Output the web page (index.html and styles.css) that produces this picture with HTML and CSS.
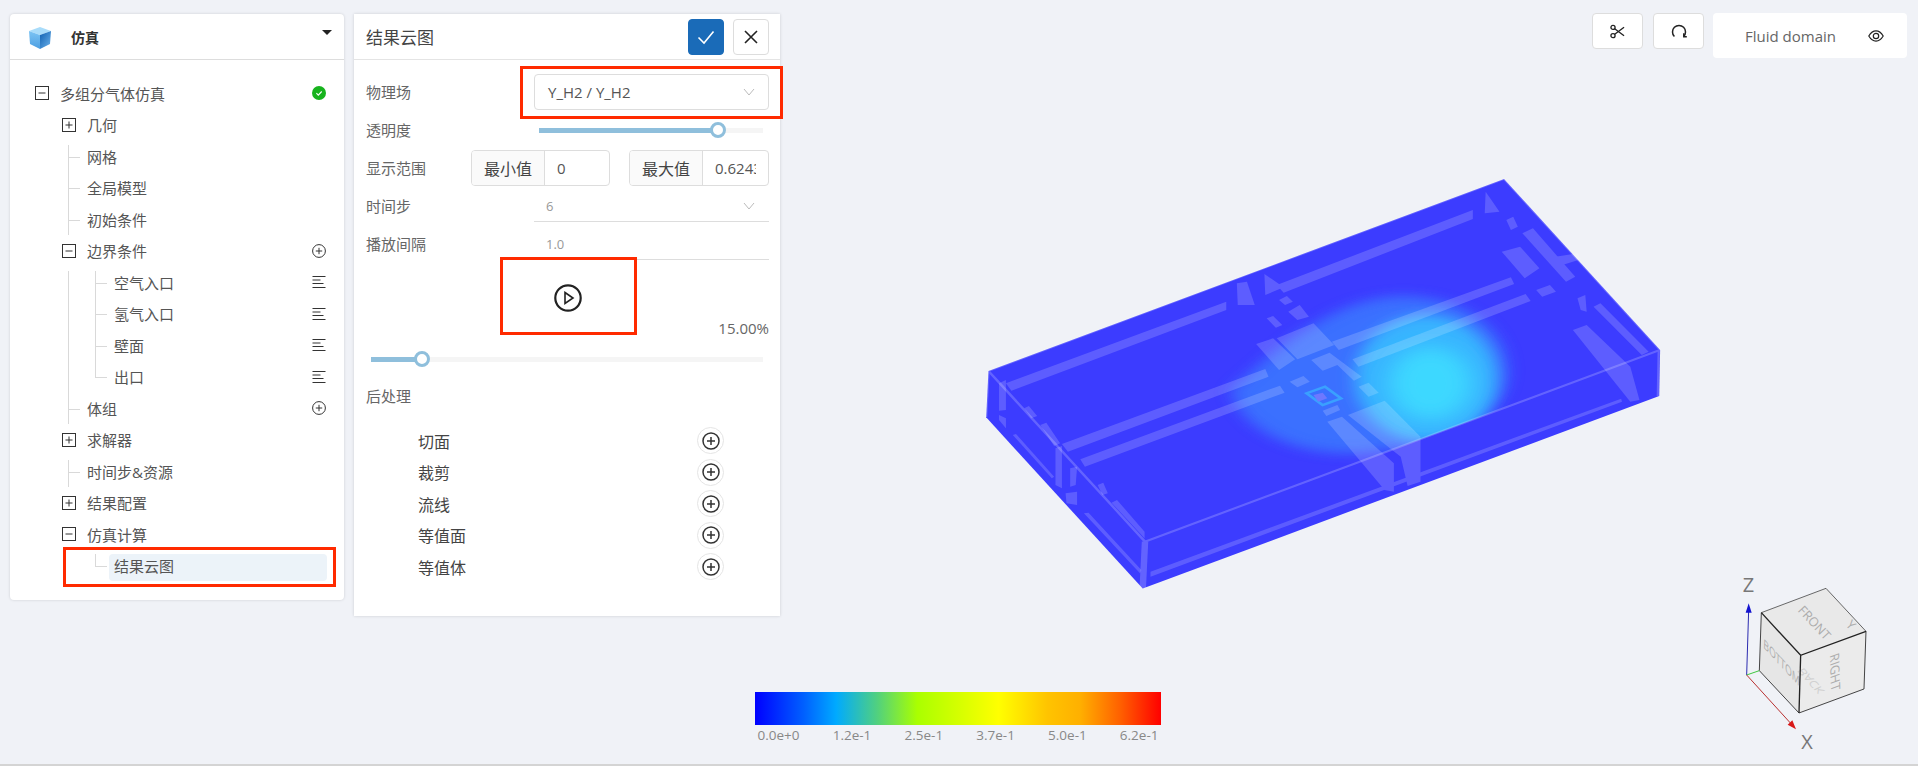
FILE: index.html
```html
<!DOCTYPE html>
<html>

<head>
    <title>仿真</title>
    <link rel="stylesheet" href="styles.css">
</head>

<body>
    <svg class="viewport" viewBox="0 0 1918 766" width="1918" height="766">
        <defs>
            <filter id="blur20" x="-40%" y="-40%" width="180%" height="180%"><feGaussianBlur stdDeviation="18"></feGaussianBlur></filter>
            <filter id="blur30" x="-50%" y="-50%" width="200%" height="200%"><feGaussianBlur stdDeviation="26"></feGaussianBlur></filter>
            <clipPath id="topFace"><polygon points="62,603 1185,27 1525,540 403,1115"></polygon></clipPath>
        </defs>

        <!-- model: coordinates below are in a stretched space, see the transform -->
        <g transform="translate(960 170) scale(0.4591 0.3333)">
            <polygon points="1185,27 62,603 57,742 398,1256 1523,678 1525,540" fill="#3c3cff"></polygon>

            <g clip-path="url(#topFace)">
                <path d="M590,660 C670,560 800,390 950,378 C1100,372 1200,480 1190,620 C1180,760 1000,860 820,850 C710,840 610,770 590,660 Z" fill="#3a7dff" opacity="0.8" filter="url(#blur20)"></path>
                <ellipse cx="1015" cy="625" rx="155" ry="190" fill="#37b4ff" filter="url(#blur20)"></ellipse>
                <ellipse cx="1025" cy="640" rx="90" ry="110" fill="#3cd8ff" filter="url(#blur30)"></ellipse>
            </g>

            <g fill="#fff" opacity="0.17">
                <polygon points="100,640 580,395 580,420 112,662"></polygon>
                <polygon points="690,345 1117,120 1117,147 705,368"></polygon>
                <polygon points="222,822 665,597 672,620 235,845"></polygon>
                <polygon points="262,868 697,647 707,668 272,890"></polygon>
                <polygon points="810,515 1200,322 1207,342 825,540"></polygon>
                <polygon points="855,568 1232,372 1243,393 868,590"></polygon>
                <polygon points="690,505 770,460 815,525 735,568"></polygon>
                <polygon points="645,522 682,505 730,568 695,600"></polygon>
                <polygon points="765,570 805,548 875,620 858,632 822,585 790,602"></polygon>
                <polygon points="718,635 748,618 762,635 735,652"></polygon>
                <polygon points="868,650 890,638 912,668 890,680"></polygon>
                <polygon points="845,735 925,692 1003,800 1003,935 975,948 960,860"></polygon>
                <polygon points="800,755 832,740 945,880 945,965 925,960"></polygon>
                <polygon points="790,722 822,705 828,720 798,738"></polygon>
                <polygon points="715,425 740,405 760,440 735,450"></polygon>
                <polygon points="695,390 712,378 725,395 708,405"></polygon>
                <polygon points="668,445 682,438 702,465 688,473"></polygon>
                <polygon points="1180,245 1220,230 1262,295 1230,325"></polygon>
                <polygon points="1255,360 1285,345 1298,365 1268,380"></polygon>
                <polygon points="1225,190 1248,175 1340,320 1320,335"></polygon>
                <polygon points="1190,150 1205,140 1215,170 1200,180"></polygon>
                <polygon points="1290,262 1345,250 1352,268 1300,290"></polygon>
                <polygon points="1335,480 1365,465 1460,590 1480,690 1460,695"></polygon>
                <polygon points="1380,410 1395,400 1500,545 1485,555"></polygon>
                <polygon points="1345,385 1362,375 1365,425 1352,420"></polygon>
                <polygon points="625,335 642,405 605,405 603,340"></polygon>
                <polygon points="663,312 705,352 665,375"></polygon>
                <polygon points="1145,65 1175,125 1143,130"></polygon>
                <polygon points="208,835 222,828 222,955 208,945"></polygon>
                <polygon points="240,895 255,890 252,945 240,950"></polygon>
                <polygon points="230,970 255,965 255,1005 232,1000"></polygon>
                <polygon points="270,1030 280,1028 395,1200 392,1210"></polygon>
                <polygon points="415,1205 1440,686 1442,695 415,1220"></polygon>
                <polygon points="115,795 122,792 205,920 200,925"></polygon>
                <polygon points="85,640 100,630 100,720 85,722"></polygon>
                <polygon points="85,735 100,745 100,775 85,750"></polygon>
                <polygon points="140,715 150,708 168,738 155,745"></polygon>
                <polygon points="175,765 188,758 218,820 205,828"></polygon>
                <polygon points="300,945 312,938 322,970 310,975"></polygon>
                <polygon points="330,998 342,990 402,1085 402,1105"></polygon>
            </g>

            <g stroke="#fff" fill="none" opacity="0.2">
                <polyline points="62,603 403,1115 1525,540" stroke-width="6"></polyline>
                <polyline points="62,603 1185,27 1525,540" stroke-width="5"></polyline>
                <line x1="403" y1="1115" x2="398" y2="1256" stroke-width="14"></line>
                <line x1="1522" y1="540" x2="1520" y2="678" stroke-width="5"></line>
                <line x1="62" y1="603" x2="57" y2="742" stroke-width="5"></line>
            </g>

            <g fill="none">
                <polygon points="755,670 795,650 830,685 790,705" stroke="#3aa0ff" stroke-width="7"></polygon>
                <polygon points="770,675 790,668 800,685 780,695" fill="#6e78ff"></polygon>
            </g>
        </g>

        <!-- orientation cube -->
        <g transform="translate(1720 560) scale(0.3333)">
            <polygon points="124,158 318,85 438,214 242,286" fill="#e9e9e9"></polygon>
            <polygon points="124,158 242,286 237,459 118,332" fill="#e6e6e6"></polygon>
            <polygon points="242,286 438,214 432,387 237,459" fill="#ebebeb"></polygon>

            <g class="cube-label">
                <text transform="matrix(0.68 0.74 -0.74 0.68 232 152)">FRONT</text>
                <text transform="matrix(0.68 0.74 -0.03 1 130 262)">BOTTOM</text>
                <text transform="matrix(0.03 1 -1 0.37 330 286)">RIGHT</text>
                <text class="cube-back" transform="matrix(0.68 0.74 0.74 -0.38 250 322)">BACK</text>
                <text transform="matrix(0.68 0.74 -0.74 0.68 376 196)">Y</text>
            </g>

            <g fill="none" stroke="#222">
                <polyline points="124,158 318,85 438,214" stroke-width="2"></polyline>
                <polyline points="124,158 242,286 438,214" stroke-width="4"></polyline>
                <line x1="242" y1="286" x2="237" y2="459" stroke-width="4"></line>
                <polyline points="124,158 118,332 237,459 432,387 438,214" stroke-width="2.5"></polyline>
            </g>

            <line x1="80" y1="345" x2="86" y2="150" stroke="#2a2ab0" stroke-width="3"></line>
            <polygon points="86,130 95,158 77,158" fill="#1414d0"></polygon>
            <line x1="80" y1="345" x2="118" y2="332" stroke="#3fc83f" stroke-width="3"></line>
            <line x1="80" y1="345" x2="212" y2="490" stroke="#b83030" stroke-width="3"></line>
            <polygon points="228,508 203,494 217,481" fill="#d81818"></polygon>

            <text class="axis-label" x="68" y="96">Z</text>
            <text class="axis-label" x="244" y="566">X</text>
        </g>
    </svg>

    <div class="app">
        <div class="card tree-card">
            <div class="card-head">
                <svg class="logo" viewBox="0 0 24 24" width="24" height="24">
                    <defs>
                        <linearGradient id="logoRight" x1="0" y1="0" x2="1" y2="1">
                            <stop offset="0" stop-color="#0f5fb0"></stop>
                            <stop offset="1" stop-color="#6db3ec"></stop>
                        </linearGradient>
                        <linearGradient id="logoLeft" x1="0" y1="0" x2="0" y2="1">
                            <stop offset="0" stop-color="#7cc4f4"></stop>
                            <stop offset="1" stop-color="#4d9fe2"></stop>
                        </linearGradient>
                    </defs>
                    <polygon points="12,1 23,5 12,9 1,5" fill="#a9dcfa"></polygon>
                    <polygon points="1,5 12,9 12,23 2,18" fill="url(#logoLeft)"></polygon>
                    <polygon points="12,9 23,5 22,18 12,23" fill="url(#logoRight)"></polygon>
                </svg>
                <span class="card-name">仿真</span>
                <span class="caret"></span>
            </div>

            <ul class="tree">
                <li class="row">
                    <svg class="expander" viewBox="0 0 14 14"><rect x="0.5" y="0.5" width="13" height="13"></rect><path d="M3.5 7h7"></path></svg>
                    <span>多组分气体仿真</span>
                    <svg class="row-icon" viewBox="0 0 14 14"><circle cx="7" cy="7" r="7" fill="#17b31d"></circle><path d="M4.4 7.2l1.9 1.9 3.4-3.6" fill="none" stroke="#fff" stroke-width="1.1"></path></svg>
                </li>
                <li class="row lvl1">
                    <svg class="expander" viewBox="0 0 14 14"><rect x="0.5" y="0.5" width="13" height="13"></rect><path d="M3.5 7h7M7 3.5v7"></path></svg>
                    <span>几何</span>
                </li>
                <li>
                    <ul class="sub">
                        <li class="row leaf1"><span>网格</span></li>
                        <li class="row leaf1"><span>全局模型</span></li>
                        <li class="row leaf1"><span>初始条件</span></li>
                    </ul>
                </li>
                <li class="row lvl1">
                    <svg class="expander" viewBox="0 0 14 14"><rect x="0.5" y="0.5" width="13" height="13"></rect><path d="M3.5 7h7"></path></svg>
                    <span>边界条件</span>
                    <svg class="row-icon" viewBox="0 0 14 14"><circle cx="7" cy="7" r="6.4" class="line-icon"></circle><path d="M3.8 7h6.4M7 3.8v6.4" class="line-icon"></path></svg>
                </li>
                <li>
                    <ul class="sub">
                        <li>
                            <ul class="sub2">
                                <li class="row leaf2"><span>空气入口</span><svg class="row-icon" viewBox="0 0 14 14"><path d="M0.5 1.5h13M0.5 5h8M0.5 8.500h11M0.5 12.500h13" class="line-icon"></path></svg></li>
                                <li class="row leaf2"><span>氢气入口</span><svg class="row-icon" viewBox="0 0 14 14"><path d="M0.5 1.500h13M0.500 5h8M0.500 8.500h11M0.500 12.500h13" class="line-icon"></path></svg></li>
                                <li class="row leaf2"><span>壁面</span><svg class="row-icon" viewBox="0 0 14 14"><path d="M0.5 1.500h13M0.500 5h8M0.500 8.500h11M0.500 12.500h13" class="line-icon"></path></svg></li>
                                <li class="row leaf2"><span>出口</span><svg class="row-icon" viewBox="0 0 14 14"><path d="M0.5 1.500h13M0.500 5h8M0.500 8.500h11M0.500 12.500h13" class="line-icon"></path></svg></li>
                            </ul>
                        </li>
                        <li class="row leaf1">
                            <span>体组</span>
                            <svg class="row-icon" viewBox="0 0 14 14"><circle cx="7" cy="7" r="6.400" class="line-icon"></circle><path d="M3.800 7h6.400M7 3.800v6.400" class="line-icon"></path></svg>
                        </li>
                    </ul>
                </li>
                <li class="row lvl1">
                    <svg class="expander" viewBox="0 0 14 14"><rect x="0.5" y="0.5" width="13" height="13"></rect><path d="M3.5 7h7M7 3.5v7"></path></svg>
                    <span>求解器</span>
                </li>
                <li>
                    <ul class="sub">
                        <li class="row leaf1"><span>时间步&amp;资源</span></li>
                    </ul>
                </li>
                <li class="row lvl1">
                    <svg class="expander" viewBox="0 0 14 14"><rect x="0.5" y="0.5" width="13" height="13"></rect><path d="M3.5 7h7M7 3.5v7"></path></svg>
                    <span>结果配置</span>
                </li>
                <li class="row lvl1">
                    <svg class="expander" viewBox="0 0 14 14"><rect x="0.5" y="0.5" width="13" height="13"></rect><path d="M3.5 7h7"></path></svg>
                    <span>仿真计算</span>
                </li>
                <li>
                    <ul class="sub2">
                        <li class="row leaf2 selected"><span>结果云图</span></li>
                    </ul>
                </li>
            </ul>
        </div>

        <div class="card panel">
            <div class="panel-head">
                <span class="panel-title">结果云图</span>
                <button class="head-btn ok">
                    <svg viewBox="0 0 18 18" width="18" height="18"><path d="M1.500 9.500l5.500 5.500 9.500-11.500" fill="none" stroke="#fff" stroke-width="1.600"></path></svg>
                </button>
                <button class="head-btn">
                    <svg viewBox="0 0 14 14" width="14" height="14"><path d="M1 1l12 12M13 1L1 13" fill="none" stroke="#222" stroke-width="1.600"></path></svg>
                </button>
            </div>

            <div class="panel-body">
                <div class="field">
                    <span class="label">物理场</span>
                    <div class="select">
                        <span>Y_H2 / Y_H2</span>
                        <svg class="chevron" viewBox="0 0 12 8"><path d="M1 1l5 6 5-6"></path></svg>
                    </div>
                </div>

                <div class="field opacity-row">
                    <span class="label">透明度</span>
                    <div class="slider short">
                        <div class="slider-fill" style="width: 80%"></div>
                        <div class="slider-thumb" style="left: 80%"></div>
                    </div>
                </div>

                <div class="field">
                    <span class="label">显示范围</span>
                    <div class="range-group">
                        <div class="range-input"><span class="addon">最小值</span><span class="range-value">0</span></div>
                        <div class="range-input"><span class="addon">最大值</span><span class="range-value">0.6243</span></div>
                    </div>
                </div>

                <div class="field plain-row first-plain">
                    <span class="label">时间步</span>
                    <div class="plain-input">
                        <span>6</span>
                        <svg class="chevron" viewBox="0 0 12 8"><path d="M1 1l5 6 5-6"></path></svg>
                    </div>
                </div>

                <div class="field plain-row">
                    <span class="label">播放间隔</span>
                    <div class="plain-input"><span>1.0</span></div>
                </div>

                <div class="play-row">
                    <svg viewBox="0 0 28 28" width="28" height="28">
                        <circle cx="14" cy="14" r="12.700" fill="none" stroke="#222" stroke-width="2.200"></circle>
                        <path d="M11 8.500l8 5.500-8 5.500z" fill="none" stroke="#222" stroke-width="1.600"></path>
                    </svg>
                </div>

                <div class="percent">15.00%</div>

                <div class="slider wide">
                    <div class="slider-fill" style="width: 13%"></div>
                    <div class="slider-thumb" style="left: 13%"></div>
                </div>

                <div class="label post-title">后处理</div>

                <ul class="post-list">
                    <li class="post-row"><span>切面</span><button class="add-btn"><svg viewBox="0 0 18 18" width="18" height="18"><circle cx="9" cy="9" r="8"></circle><path d="M5 9h8M9 5v8"></path></svg></button></li>
                    <li class="post-row"><span>裁剪</span><button class="add-btn"><svg viewBox="0 0 18 18" width="18" height="18"><circle cx="9" cy="9" r="8"></circle><path d="M5 9h8M9 5v8"></path></svg></button></li>
                    <li class="post-row"><span>流线</span><button class="add-btn"><svg viewBox="0 0 18 18" width="18" height="18"><circle cx="9" cy="9" r="8"></circle><path d="M5 9h8M9 5v8"></path></svg></button></li>
                    <li class="post-row"><span>等值面</span><button class="add-btn"><svg viewBox="0 0 18 18" width="18" height="18"><circle cx="9" cy="9" r="8"></circle><path d="M5 9h8M9 5v8"></path></svg></button></li>
                    <li class="post-row"><span>等值体</span><button class="add-btn"><svg viewBox="0 0 18 18" width="18" height="18"><circle cx="9" cy="9" r="8"></circle><path d="M5 9h8M9 5v8"></path></svg></button></li>
                </ul>
            </div>
        </div>
    </div>

    <div class="toolbar">
        <button class="tool-btn">
            <svg viewBox="0 0 16 16" width="15" height="15" fill="none" stroke="#222" stroke-width="1.400">
                <circle cx="3.200" cy="3.600" r="2.200"></circle>
                <circle cx="3.200" cy="12.400" r="2.200"></circle>
                <path d="M5 5l10 7.500M5 11l10-7.500"></path>
            </svg>
        </button>
        <button class="tool-btn">
            <svg viewBox="0 0 16 16" width="16" height="16" fill="none" stroke="#222" stroke-width="1.500">
                <path d="M3.400 13.500A6.500 6.500 0 1 1 12.600 13.500"></path>
                <path d="M12.800 10.300v3.500h3"></path>
            </svg>
        </button>
        <div class="domain-card">
            <span>Fluid domain</span>
            <svg viewBox="0 0 16 12" width="16" height="12" fill="none" stroke="#222" stroke-width="1.200">
                <path d="M0.800 6C3 2.300 5.300 0.900 8 0.900S13 2.300 15.200 6C13 9.700 10.700 11.100 8 11.100S3 9.700 0.800 6Z"></path>
                <circle cx="8" cy="6" r="2.700"></circle>
            </svg>
        </div>
    </div>

    <div class="legend">
        <div class="legend-bar"></div>
        <div class="legend-ticks">
            <span>0.0e+0</span>
            <span>1.2e-1</span>
            <span>2.5e-1</span>
            <span>3.7e-1</span>
            <span>5.0e-1</span>
            <span>6.2e-1</span>
        </div>
    </div>

    <div class="mark mark-tree"></div>
    <div class="mark mark-select"></div>
    <div class="mark mark-play"></div>
</body>

</html>
```

FILE: styles.css
```css
* {
    box-sizing: border-box;
}

body {
    margin: 0;
    width: 1918px;
    height: 766px;
    overflow: hidden;
    position: relative;
    background-color: #f0f2f7;
    border-bottom: 2px solid #d4d4d4;
    font-family: "Open Sans", "Noto Sans CJK SC", sans-serif;
    font-size: 15px;
    color: #555;
}

ul {
    list-style: none;
    margin: 0;
    padding: 0;
}

button {
    padding: 0;
    cursor: pointer;
    font: inherit;
}

.viewport {
    position: absolute;
    left: 0;
    top: 0;
}

.cube-label text {
    font-size: 38px;
    fill: #adadad;
}

.cube-label .cube-back {
    fill: #cfcfcf;
}

.axis-label {
    font-size: 60px;
    fill: #777;
}

.app {
    position: relative;
    display: flex;
    align-items: flex-start;
    gap: 10px;
    padding: 14px 0 0 10px;
}

.card {
    background-color: #fff;
    box-shadow: 0 0 3px rgba(0, 0, 0, 0.15);
}

/* left tree */
.tree-card {
    width: 334px;
    height: 586px;
    border-radius: 4px;
}

.card-head {
    display: flex;
    align-items: center;
    height: 46px;
    padding-left: 18px;
    border-bottom: 1px solid #ddd;
}

.logo {
    margin-top: 2px;
}

.card-name {
    margin-left: 19px;
    font-size: 14px;
    font-weight: 700;
    color: #333;
}

.caret {
    width: 0;
    height: 0;
    margin-left: auto;
    margin-right: 12px;
    margin-bottom: 9px;
    border-left: 5px solid transparent;
    border-right: 5px solid transparent;
    border-top: 5px solid #222;
}

.tree {
    padding: 17.500px 18px 0 25px;
}

.row {
    position: relative;
    display: flex;
    align-items: center;
    height: 31.5px;
}

.lvl1 {
    padding-left: 27px;
}

.leaf1 {
    padding-left: 52px;
}

.leaf2 {
    padding-left: 79px;
}

.expander {
    width: 14px;
    height: 14px;
    margin-right: 11px;
    flex: none;
    fill: none;
    stroke: #333;
}

.row-icon {
    width: 14px;
    height: 14px;
    margin-left: auto;
    flex: none;
}

.line-icon {
    fill: none;
    stroke: #333;
}

.sub,
.sub2 {
    position: relative;
}

.sub::before,
.sub2::before {
    content: "";
    position: absolute;
    top: 4px;
    width: 1px;
    background-color: #d9d9d9;
}

.sub::before {
    left: 33px;
    bottom: 0;
}

.sub2::before {
    left: 60px;
    bottom: 15px;
}

.leaf1::before,
.leaf2::before {
    content: "";
    position: absolute;
    top: 16px;
    width: 12px;
    height: 1px;
    background-color: #d9d9d9;
}

.leaf1::before {
    left: 33px;
}

.leaf2::before {
    left: 60px;
}

.selected::after {
    content: "";
    position: absolute;
    left: 74px;
    right: -1px;
    top: 3.500px;
    height: 27px;
    border-radius: 4px;
    background-color: #ecf3f9;
}

.selected span {
    position: relative;
    z-index: 1;
}

/* settings panel */
.panel {
    width: 426px;
    height: 602px;
}

.panel-head {
    display: flex;
    align-items: center;
    gap: 9px;
    height: 46px;
    padding: 0 11px 0 12px;
    border-bottom: 1px solid #e4e4e4;
}

.panel-title {
    margin-right: auto;
    font-size: 17px;
    color: #444;
}

.head-btn {
    display: flex;
    align-items: center;
    justify-content: center;
    width: 36px;
    height: 36px;
    border: 1px solid #ddd;
    border-radius: 4px;
    background-color: #fff;
}

.head-btn.ok {
    border-color: #1a6bb8;
    background-color: #1a6bb8;
}

.panel-body {
    padding: 14px 11px 0 12px;
}

.field {
    display: flex;
    align-items: center;
    justify-content: space-between;
    height: 36px;
}

.field .label {
    margin-top: -2px;
}

.label {
    color: #666;
}

.select {
    display: flex;
    align-items: center;
    justify-content: space-between;
    width: 235px;
    height: 36px;
    padding: 0 13px;
    border: 1px solid #ddd;
    border-radius: 4px;
    color: #555;
}

.chevron {
    width: 12px;
    height: 8px;
    fill: none;
    stroke: #bbb;
}

.opacity-row {
    height: 40px;
}

.slider {
    position: relative;
    height: 5px;
    background-color: #f5f5f5;
}

.short {
    width: 224px;
    margin-right: 6px;
}

.wide {
    width: 392px;
    margin: 0 6px 0 5px;
}

.slider-fill {
    height: 100%;
    background-color: #8fbfdc;
}

.slider-thumb {
    position: absolute;
    top: -5.5px;
    width: 16px;
    height: 16px;
    margin-left: -8px;
    border: 3px solid #8fbfdc;
    border-radius: 50%;
    background-color: #fff;
}

.range-group {
    display: flex;
    gap: 19px;
}

.range-input {
    display: flex;
    width: 140px;
    height: 36px;
    border: 1px solid #ddd;
    border-radius: 4px;
    overflow: hidden;
}

.range-input:first-child {
    width: 139px;
}

.addon {
    display: flex;
    align-items: center;
    justify-content: center;
    flex: none;
    width: 73px;
    border-right: 1px solid #ddd;
    background-color: #fafafa;
    font-size: 16px;
    color: #444;
}

.range-value {
    flex: 1;
    min-width: 0;
    margin: 0 12px;
    overflow: hidden;
    font-size: 15px;
    line-height: 34px;
    white-space: nowrap;
    color: #555;
}

.plain-row {
    height: 32px;
    margin-top: 6px;
}

.first-plain {
    margin-top: 4px;
}

.plain-input {
    display: flex;
    align-items: center;
    justify-content: space-between;
    width: 235px;
    height: 32px;
    padding: 0 14px 0 12px;
    border-bottom: 1px solid #ddd;
    font-size: 13px;
    color: #999;
}

.play-row {
    display: flex;
    justify-content: center;
    height: 27px;
    margin-top: 24px;
}

.percent {
    height: 20px;
    margin-top: 7px;
    text-align: right;
    line-height: 20px;
    color: #666;
}

.percent + .slider {
    margin-top: 18.500px;
}

.post-title {
    margin-top: 24.500px;
    height: 20px;
    line-height: 20px;
}

.post-list {
    margin-top: 19px;
}

.post-row {
    display: flex;
    align-items: center;
    justify-content: space-between;
    height: 31.500px;
    padding: 0 45px 0 52px;
    font-size: 16px;
    color: #444;
}

.add-btn {
    display: flex;
    align-items: center;
    justify-content: center;
    width: 27px;
    height: 27px;
    border: 1px solid #e5e5e5;
    border-radius: 50%;
    background-color: #fff;
}

.add-btn circle,
.add-btn path {
    fill: none;
    stroke: #333;
    stroke-width: 1.500;
}

/* overlays on the viewport */
.toolbar {
    position: absolute;
    top: 13px;
    right: 11px;
    display: flex;
    align-items: flex-start;
    gap: 10px;
}

.tool-btn {
    display: flex;
    align-items: center;
    justify-content: center;
    width: 51px;
    height: 36px;
    border: 1px solid #ddd;
    border-radius: 4px;
    background-color: #fff;
}

.domain-card {
    display: flex;
    align-items: center;
    justify-content: space-between;
    width: 194px;
    height: 45px;
    margin-left: -1px;
    padding: 0 23px 0 32px;
    border-radius: 4px;
    background-color: #fff;
    color: #666;
}

.legend {
    position: absolute;
    left: 755px;
    top: 692px;
    width: 406px;
}

.legend-bar {
    height: 33px;
    background: linear-gradient(to right, #0000ff 0%, #0060ff 12%, #00aaff 20%, #50d080 30%, #aaff00 40%, #d4ff00 50%, #ffff00 60%, #ffc400 72%, #ffb000 80%, #ff6000 90%, #ff0000 100%);
}

.legend-ticks {
    display: flex;
    justify-content: space-between;
    padding: 0 2.500px;
    margin-top: 1px;
    font-size: 13.500px;
    color: #888;
}

.mark {
    position: absolute;
    border: 3px solid #ff2a00;
}

.mark-tree {
    left: 63px;
    top: 547px;
    width: 273px;
    height: 40px;
}

.mark-select {
    left: 520px;
    top: 66px;
    width: 263px;
    height: 53px;
}

.mark-play {
    left: 500px;
    top: 257px;
    width: 137px;
    height: 78px;
}
```
